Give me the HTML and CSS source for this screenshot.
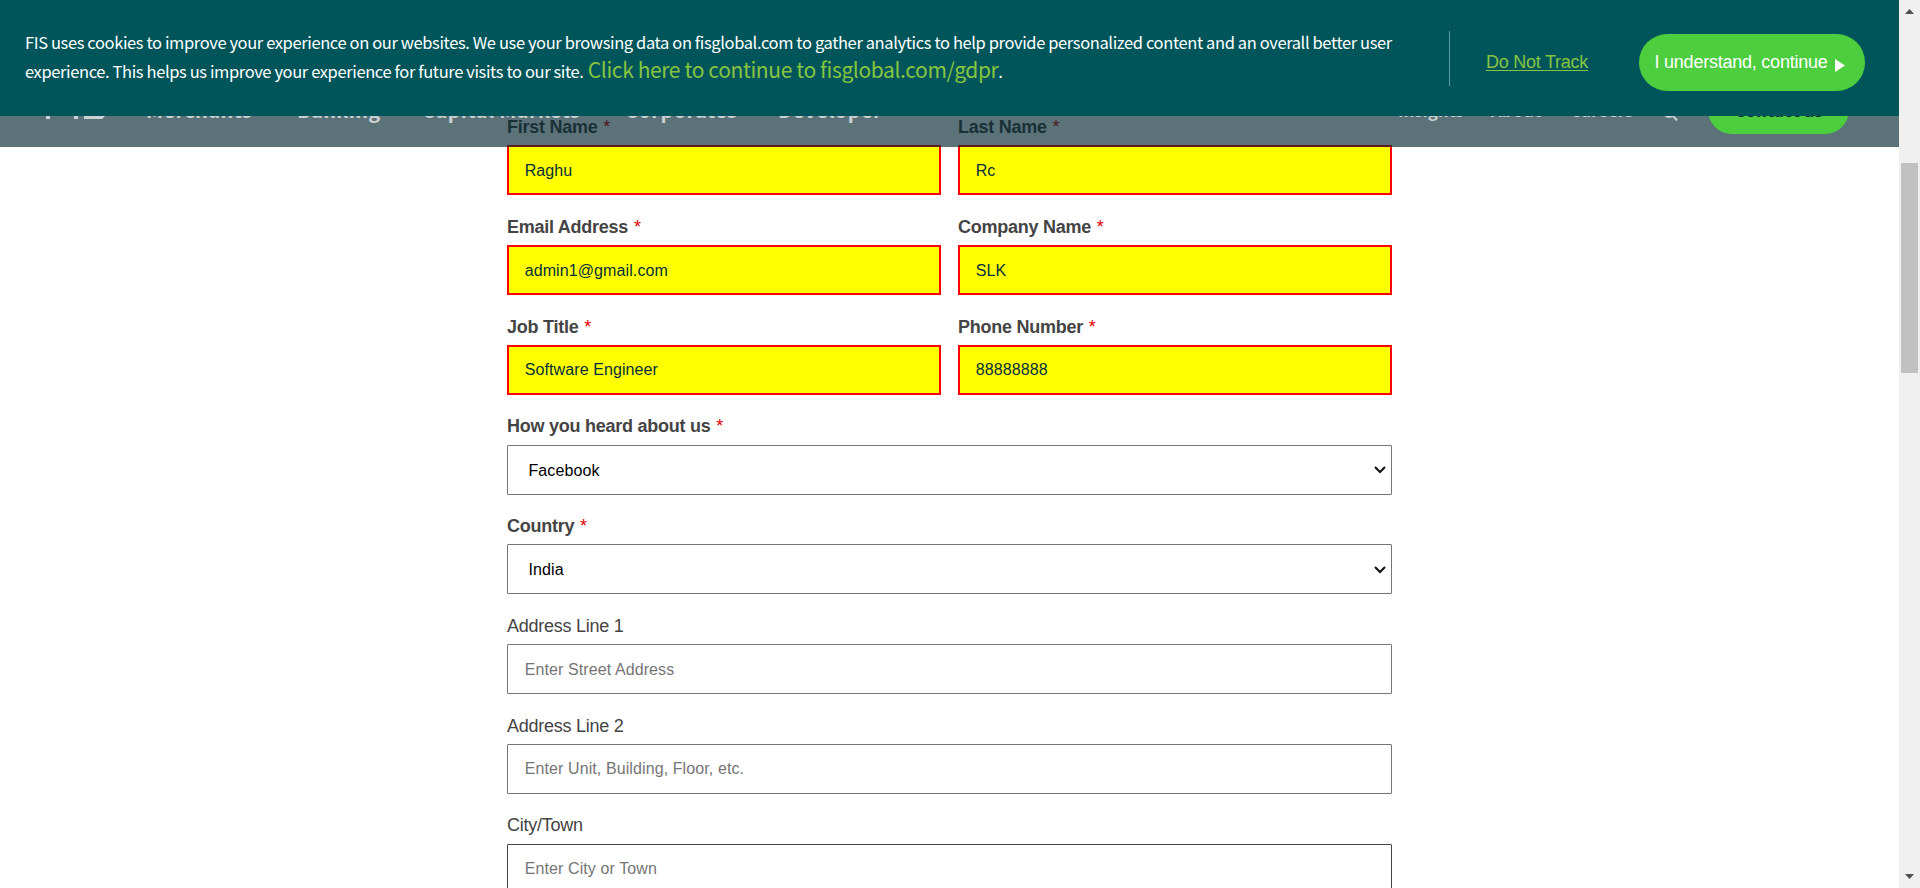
FILE: index.html
```html
<!DOCTYPE html>
<html lang="en">
<head>
<meta charset="utf-8">
<title>FIS Contact</title>
<link rel="stylesheet" href="styles.css">
</head>
<body>
<div class="frame">
  <div class="page">
    <header class="nav">
      <svg class="logo" width="70" height="28" viewBox="0 0 70 28"><path d="M4 28V4h20v4H8v6h14v4H8v10zM32 4h4v24h-4zM62 4v4H46v6h17v11l-3 3H42v-3h17v-7H42V4z" fill="#ccd2d4"/></svg>
      <nav class="links">
        <a class="m1">Merchants</a><a class="m2">Banking</a><a class="m3">Capital Markets</a><a class="m4">Corporates</a><a class="m5">Developer</a>
      </nav>
      <nav class="links small">
        <a class="s1">Insights</a><a class="s2">About</a><a class="s3">Careers</a>
        <svg class="search" width="15" height="16" viewBox="0 0 15 16"><circle cx="6" cy="7" r="5" fill="none" stroke="#ccd2d4" stroke-width="2"/><path d="M9.500 10.500l4.500 5" stroke="#ccd2d4" stroke-width="2"/></svg>
      </nav>
      <a class="contact">Contact us</a>
    </header>
    <section class="cookie">
      <p class="msg"><span class="l1">FIS uses cookies to improve your experience on our websites. We use your browsing data on fisglobal.com to gather analytics to help provide personalized content and an overall better user</span><br><span class="l2">experience. This helps us improve your experience for future visits to our site.</span> <a class="gdpr">Click here to continue to fisglobal.com/gdpr</a>.</p>
      <div class="rule"></div>
      <a class="dnt">Do Not Track</a>
      <button class="ok">I understand, continue<svg width="10" height="13" viewBox="0 0 10 13"><path d="M0 0l10 6.500-10 6.500z" fill="#fff"/></svg></button>
    </section>
    <form class="form">
      <div class="row two">
        <div><label class="req">First Name <i>*</i></label><input class="bad" value="Raghu"></div>
        <div><label class="req">Last Name <i>*</i></label><input class="bad" value="Rc"></div>
      </div>
      <div class="row two">
        <div><label class="req">Email Address <i>*</i></label><input class="bad" value="admin1@gmail.com"></div>
        <div><label class="req">Company Name <i>*</i></label><input class="bad" value="SLK"></div>
      </div>
      <div class="row two">
        <div><label class="req">Job Title <i>*</i></label><input class="bad" value="Software Engineer"></div>
        <div><label class="req">Phone Number <i>*</i></label><input class="bad" value="88888888"></div>
      </div>
      <div class="row"><label class="req">How you heard about us <i>*</i></label>
        <div class="select"><span>Facebook</span><svg width="12" height="8" viewBox="0 0 12 8"><path d="M1 1l5 5 5-5" fill="none" stroke="#101010" stroke-width="2"/></svg></div></div>
      <div class="row"><label class="req">Country <i>*</i></label>
        <div class="select"><span>India</span><svg width="12" height="8" viewBox="0 0 12 8"><path d="M1 1l5 5 5-5" fill="none" stroke="#101010" stroke-width="2"/></svg></div></div>
      <div class="row"><label>Address Line 1</label><input placeholder="Enter Street Address"></div>
      <div class="row"><label>Address Line 2</label><input placeholder="Enter Unit, Building, Floor, etc."></div>
      <div class="row"><label>City/Town</label><input class="dark" placeholder="Enter City or Town"></div>
    </form>
  </div>
  <div class="scroll">
    <svg width="9" height="5" viewBox="0 0 9 5"><path d="M0 5L4.500 0 9 5z" fill="#505050"/></svg>
    <div class="thumb"></div>
    <svg class="down" width="9" height="5" viewBox="0 0 9 5"><path d="M0 0h9L4.500 5z" fill="#505050"/></svg>
  </div>
</div>
</body>
</html>
```
FILE: styles.css
```css
* { box-sizing: border-box; }
body { margin: 0; overflow: hidden; background: #fff; font-family: "Liberation Sans", Arial, sans-serif; }
.frame { display: flex; width: 1920px; height: 888px; overflow: hidden; }
.page { position: relative; width: 1899px; height: 888px; overflow: hidden; }

.nav { position: absolute; z-index: 2; top: 0; left: 0; width: 1899px; height: 147px; padding: 0 50px 0 42px; display: flex; align-items: flex-start; background: rgba(3, 38, 49, .65); color: #ccd2d4; font-family: "Noto Sans CJK SC", sans-serif; font-weight: 700; }
.logo { margin-top: 91px; flex: none; }
.links { display: flex; margin: 97px 0 0 34px; font-size: 20px; line-height: 26px; letter-spacing: .35px; white-space: nowrap; }
.links a { flex: none; }
.m1 { width: 151px; } .m2 { width: 125px; } .m3 { width: 203px; } .m4 { width: 153px; } .m5 { width: 101px; }
.small { margin: 97px 0 0 auto; font-size: 17px; letter-spacing: -.1px; }
.s1 { width: 93px; } .s2 { width: 79px; } .s3 { width: 93px; }
.search { margin-top: 8px; }
.contact { width: 141px; height: 48px; margin: 86px 0 0 30px; border-radius: 24px; background: #4dce3e; color: #012834; font-size: 17px; line-height: 48px; text-align: center; }

.cookie { position: absolute; z-index: 3; top: 0; left: 0; width: 1899px; height: 116px; display: flex; background: #00555a; color: #fff; }
.msg { margin: 28px 0 0 25px; width: 1424px; flex: none; font: 16.5px/29px "Noto Sans CJK SC", sans-serif; letter-spacing: -.385px; white-space: nowrap; }
.gdpr { margin-left: 1px; font-size: 21px; letter-spacing: -.38px; line-height: 0; color: #87c540; }
.rule { width: 1px; height: 55px; margin-top: 31px; background: #5f9aa0; }
.dnt { margin: 52px 0 0 36px; width: 153px; font-size: 18px; line-height: 21px; letter-spacing: -.25px; color: #87c540; text-decoration: underline; text-underline-offset: 2px; white-space: nowrap; }
.ok { display: flex; align-items: center; margin-top: 34px; width: 226px; height: 57px; padding: 0 0 0 15.5px; border: 0; border-radius: 29px; background: #4dce3e; color: #fff; font: 18px "Liberation Sans", Arial, sans-serif; letter-spacing: -.23px; white-space: nowrap; }
.ok svg { margin: 6px 0 0 7px; }

.form { width: 885px; margin: 112px 0 0 507px; }
.row { height: 99.75px; }
.two { display: grid; grid-template-columns: 434px 434px; gap: 17px; }
label { display: block; height: 33.3px; padding-top: 5px; font-size: 18px; line-height: 21px; letter-spacing: -.25px; color: #444; white-space: nowrap; }
.req { font-weight: 700; }
i { margin-left: 1px; font-style: normal; font-weight: 400; color: #e00000; }
input, .select { display: block; width: 100%; height: 50px; padding: 1px 16.7px 0; border: 1px solid #767676; border-radius: 1px; background: #fff; font: 16px "Liberation Sans", Arial, sans-serif; letter-spacing: .1px; color: #000; }
input::placeholder { color: #757575; }
.bad { padding: 1px 15.7px 0; border: 2px solid #f00; border-radius: 0; background: #ff0; color: #05303c; }
.dark { border-color: #444; }
.select { display: flex; align-items: center; justify-content: space-between; padding: 2px 5px 0 20.5px; }
.select svg { margin-top: -1px; }

.scroll { width: 21px; height: 888px; padding: 9px 0 9px; background: #f0f0f0; display: flex; flex-direction: column; align-items: center; }
.thumb { width: 17px; height: 210px; margin: 149px 0 auto; background: #c1c1c1; flex: none; }
```
